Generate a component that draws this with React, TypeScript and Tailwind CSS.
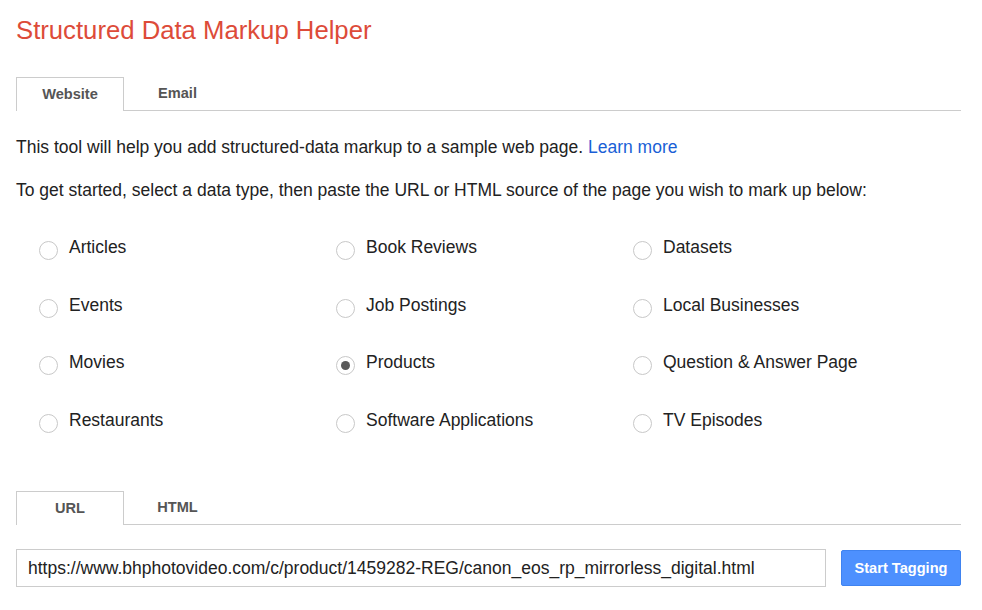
import { useState } from 'react';

const dataTypes = [
  'Articles',
  'Book Reviews',
  'Datasets',
  'Events',
  'Job Postings',
  'Local Businesses',
  'Movies',
  'Products',
  'Question & Answer Page',
  'Restaurants',
  'Software Applications',
  'TV Episodes',
];

function Tabs({ tabs, active, onSelect }: { tabs: string[]; active: string; onSelect: (t: string) => void }) {
  return (
    <div className="flex border-b border-[#cccccc]">
      {tabs.map((t) =>
        t === active ? (
          <button
            key={t}
            onClick={() => onSelect(t)}
            className="-mb-px h-[34px] w-[108px] border border-b-0 border-[#cccccc] bg-white text-[14.6px] font-bold text-[#555555]"
          >
            {t}
          </button>
        ) : (
          <button
            key={t}
            onClick={() => onSelect(t)}
            className="h-[33px] w-[107px] text-[14.6px] font-bold text-[#555555]"
          >
            {t}
          </button>
        ),
      )}
    </div>
  );
}

export default function App() {
  const [mode, setMode] = useState('Website');
  const [source, setSource] = useState('URL');
  const [selected, setSelected] = useState('Products');
  const [url, setUrl] = useState('https://www.bhphotovideo.com/c/product/1459282-REG/canon_eos_rp_mirrorless_digital.html');

  return (
    <div className="min-h-screen bg-white pl-4 pr-[21px] pt-[14px] font-['Liberation_Sans',Arial,sans-serif] text-[#222222]">
      <h1 className="text-[25.7px] leading-[32px] text-[#dd4b39]">Structured Data Markup Helper</h1>

      <div className="mt-[31px]">
        <Tabs tabs={['Website', 'Email']} active={mode} onSelect={setMode} />
      </div>

      <p className="mt-[26px] text-[17.5px] leading-[20px]">
        This tool will help you add structured-data markup to a sample web page.{' '}
        <a href="#" className="text-[#1a5fd6]">Learn more</a>
      </p>
      <p className="mt-[23px] text-[17.5px] leading-[20px]">
        To get started, select a data type, then paste the URL or HTML source of the page you wish to mark up below:
      </p>

      {/* data type radios */}
      <div className="mt-[37px] grid grid-cols-[297px_297px_297px] gap-y-[37.7px] pl-[23px]">
        {dataTypes.map((d) => (
          <label key={d} className="flex h-[20px] cursor-pointer items-center" onClick={() => setSelected(d)}>
            <span className="mt-[7px] flex h-[19px] w-[19px] shrink-0 items-center justify-center rounded-full border border-[#c8c8c8] bg-white">
              {selected === d && <span className="h-[9px] w-[9px] rounded-full bg-[#5a5a5a]" />}
            </span>
            <span className="ml-[11px] text-[17.5px] leading-[20px] text-[#222222]">{d}</span>
          </label>
        ))}
      </div>

      <div className="mt-[61px]">
        <Tabs tabs={['URL', 'HTML']} active={source} onSelect={setSource} />
      </div>

      <div className="mt-[24px] flex items-center">
        <input
          value={url}
          onChange={(e) => setUrl(e.target.value)}
          className="h-[38px] w-[810px] border border-[#cccccc] px-[11px] text-[17.5px] text-[#222222] outline-none"
        />
        <button className="ml-auto h-[36px] w-[120px] rounded-[2px] border border-[#3f83f0] bg-[#4d90fe] pt-[2px] text-[14.6px] font-bold text-white">
          Start Tagging
        </button>
      </div>
    </div>
  );
}
